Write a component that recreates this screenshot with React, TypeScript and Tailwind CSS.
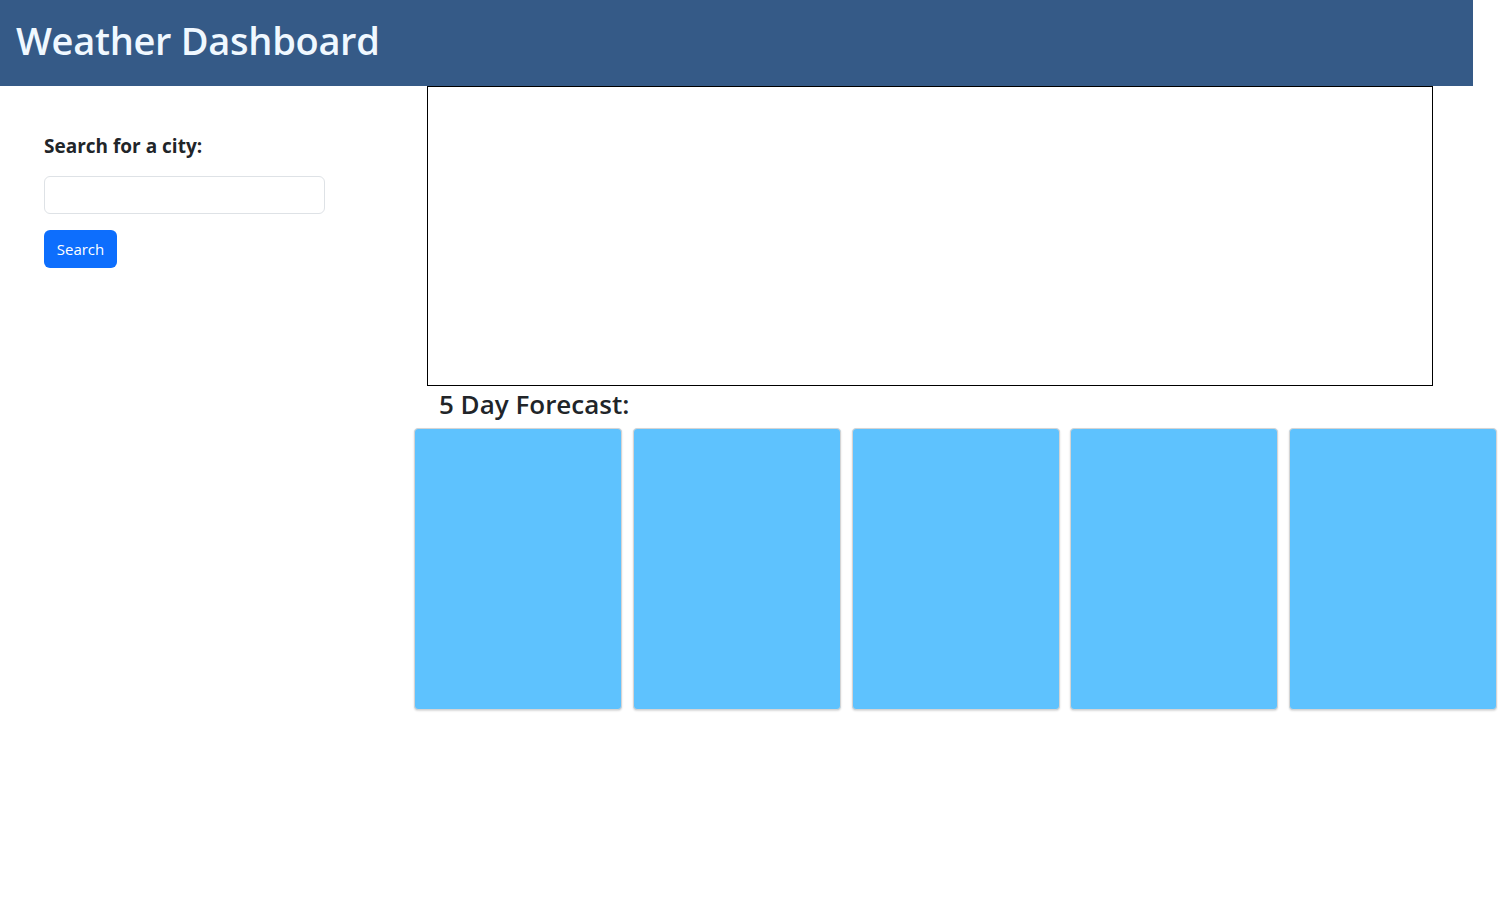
export default function App() {
  const days = [0, 1, 2, 3, 4];

  return (
    <div className="min-h-[920px] w-[1498px] overflow-hidden bg-white font-['Open_Sans',sans-serif] text-[#212529]">
      <header className="flex h-[86px] w-[1473px] items-center bg-[#355a87] px-4 pb-[6px]">
        <h1 className="text-[38px] font-semibold leading-none tracking-[-0.3px] text-[#f0f8ff]">Weather Dashboard</h1>
      </header>

      <div className="flex">
        <aside className="w-[427px] shrink-0 px-[44px] pt-[48px]">
          <h5 className="text-[19px] font-bold leading-[24px]">Search for a city:</h5>
          <input
            type="text"
            className="mt-[18px] block h-[38px] w-[281px] rounded-[6px] border border-[#dee2e6] px-3"
          />
          <button className="mt-4 h-[38px] w-[73px] rounded-[6px] bg-[#0d6efd] text-[15px] text-white">
            Search
          </button>
        </aside>

        <main className="w-[1006px] shrink-0">
          <section className="h-[300px] border border-black" />
          <h3 className="px-3 text-[26px] font-semibold leading-[36px]">5 Day Forecast:</h3>
          <div className="ml-[-13px] mt-[6px] flex gap-[10.75px]">
            {days.map((d) => (
              <div
                key={d}
                className="h-[282px] w-[208px] shrink-0 rounded-[4px] border border-[#d4d4d4] bg-[#5ec2fe] shadow-[0_1px_2px_rgba(0,0,0,0.15)]"
              />
            ))}
          </div>
        </main>
      </div>
    </div>
  );
}
